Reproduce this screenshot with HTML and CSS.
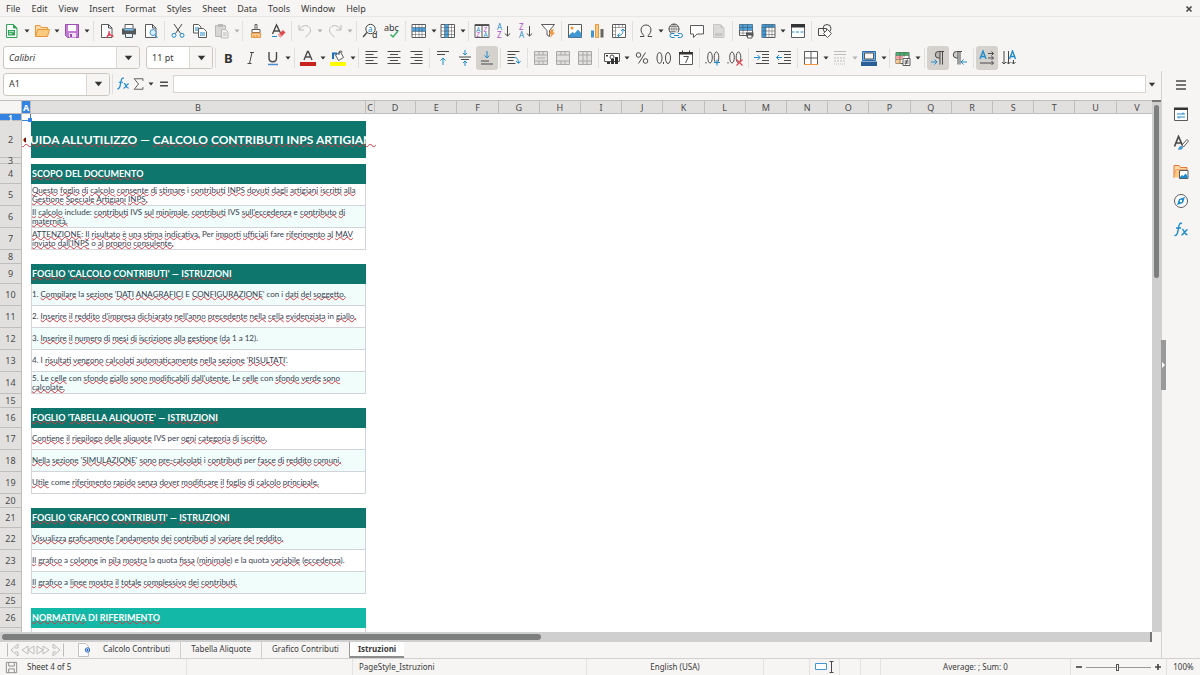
FILE: index.html
```html
<!DOCTYPE html>
<html lang="it">
<head>
<meta charset="utf-8">
<meta name="viewport" content="width=device-width, initial-scale=1">
<title>Calcolo Contributi - Istruzioni</title>
<link rel="stylesheet" href="styles.css">
</head>
<body>
<svg class="defs" aria-hidden="true">
  <symbol id="caret" viewBox="0 0 6 4"><path class="f-dark" d="M.5.5h5L3 3.5z"/></symbol>
  <symbol id="new" viewBox="0 0 16 16"><path d="M2.5 1.500h7l3.500 3.500v9.500h-10.500z" fill="#fff" stroke="#33a457"/><path d="M9.500 1.500v3.500h3.500z" fill="#33a457" stroke="#33a457"/><path d="M4 7h7v5.500H4z" fill="#33a457"/><path d="M5 8.700h5M5 10.700h3" stroke="#c8efd4"/></symbol>
  <symbol id="open" viewBox="0 0 16 16"><path d="M1.500 13.500v-11h4.500l1.500 2h6v2" fill="#fbd9a2" stroke="#e8973a"/><path d="M1.500 13.500l2.300-7h11.700l-2 7z" fill="#fbc980" stroke="#e8973a"/></symbol>
  <symbol id="save" viewBox="0 0 16 16"><path d="M1.500 1.500h13v13h-11l-2-2z" fill="#c47bd4" stroke="#9d4bb3"/><path d="M4 2h8v6H4z" fill="#fff"/><path d="M5 10h7v4.500H5z" fill="#efe0f2"/><path d="M6 11h2v3H6z" fill="#9d4bb3"/></symbol>
  <symbol id="pdf" viewBox="0 0 16 16"><path class="page" d="M2.500 1.500h7l3.500 3.500v9.500h-10.500z"/><path class="ln" d="M9.500 1.500v3.500h3.500"/><path d="M10 8c.5 3-1 5-2.500 7M10 8c0 3 2 5 4.500 5.500M8 13c2-1.200 4-1 6-.5" fill="none" stroke="#e0455a" stroke-width="1.300"/></symbol>
  <symbol id="print" viewBox="0 0 16 16"><path class="page" d="M4 1.500h8v4H4z"/><path d="M1 5.500h14v6H1z" fill="#55585a"/><path d="M3.500 5.500h9v2h-9z" fill="#7cc1ee"/><path d="M4.500 10.500h7v4h-7z" fill="#e6f2fa" stroke="#55585a"/></symbol>
  <symbol id="preview" viewBox="0 0 16 16"><path class="page" d="M2.500 1.500h7l3.500 3.500v9.500h-10.500z"/><path class="ln" d="M9.500 1.500v3.500h3.500"/><circle cx="10" cy="9.500" r="3" fill="#dceefa" stroke="#3f98d4"/><path class="bl" d="M12 12l2.500 3"/></symbol>
  <symbol id="cut" viewBox="0 0 16 16"><path class="ln" d="M4 1l6.500 9.500M12 1L5.500 10.500"/><circle class="bl" cx="4" cy="12.300" r="2"/><circle class="bl" cx="12" cy="12.300" r="2"/></symbol>
  <symbol id="copy" viewBox="0 0 16 16"><path class="page" d="M1.500 1.500h5l2.500 2.500v6h-7.500z"/><path d="M3 5h4M3 7h4" class="bl"/><path class="page" d="M6.500 5.500h5l3 3v6h-8z"/><path d="M8 10h5M8 12h5" class="bl"/></symbol>
  <symbol id="paste" viewBox="0 0 16 16"><path d="M1.500 2.500h10v11h-10z" fill="#d8d7d5" stroke="#bbb9b7"/><path d="M4 1h5v3H4z" fill="#bbb9b7"/><path d="M7.500 6.500h4l2.500 2.500v6h-6.500z" fill="#f2f1f0" stroke="#bbb9b7"/><path d="M9 10h3.500M9 12h3.500" stroke="#bbb9b7"/></symbol>
  <symbol id="clone" viewBox="0 0 16 16"><path class="page" d="M7 1.500h2v5H7zM4 6.500h8v3H4z"/><path d="M3.500 10h9v4.500h-9z" fill="#f9c88d" stroke="#e8973a"/><path d="M6 12v2.500M9 12v2.500" stroke="#e8973a"/></symbol>
  <symbol id="clear" viewBox="0 0 16 16"><path class="ln thick" d="M2.500 11L6.500 2l4 8M4 8h5"/><path d="M8 12l5-5 2.500 2.500-5 5z" fill="#e5484f"/><path d="M8 12l1.500-1.500L12 13l-1.500 1.500z" fill="#f6a1a5"/><path class="bl" d="M2 13.500h5"/></symbol>
  <symbol id="undo" viewBox="0 0 16 16"><path class="off" d="M2 2v5h5M2.500 6.500C5 2 10 1.500 12.500 4.500s.5 6-4 9.500"/></symbol>
  <symbol id="redo" viewBox="0 0 16 16"><path class="off" d="M14 2v5H9M13.500 6.500C11 2 6 1.500 3.500 4.500s-.5 6 4 9.500"/></symbol>
  <symbol id="find" viewBox="0 0 16 16"><circle cx="8.500" cy="6" r="4.700" fill="#fff" stroke="#444"/><path class="ln thick" d="M5 9.500L1 14"/><text x="6" y="8.500" font-size="8" fill="#1e8bcd">a</text><text x="10" y="15" font-size="9" class="f-dark">d</text></symbol>
  <symbol id="spell" viewBox="0 0 16 16"><text x="0" y="7.500" font-size="9" class="f-dark">abc</text><path d="M6.500 11.500l2.500 2.500 5-6" fill="none" stroke="#37b064" stroke-width="1.500"/></symbol>
  <symbol id="row" viewBox="0 0 16 16"><path class="page" d="M1 1.500h13.500v13H1z"/><path d="M1 4.500h13.500v4H1z" fill="#4aa3df"/><path class="ln thin" d="M1 4.500h13.500M1 8.500h13.500M1 11.500h13.500M4.500 1.500v13M8 1.500v13M11 1.500v13"/></symbol>
  <symbol id="col" viewBox="0 0 16 16"><path class="page" d="M1 1.500h13.500v13H1z"/><path d="M4.500 1.500h4v13h-4z" fill="#4aa3df"/><path class="ln thin" d="M1 4.500h13.500M1 8h13.500M1 11.500h13.500M4.500 1.500v13M8.500 1.500v13M11.500 1.500v13"/></symbol>
  <symbol id="sort" viewBox="0 0 16 16"><path class="page" d="M1 1.500h14v13H1z"/><path class="ln" d="M1 2.500h14M8 2v12.500"/><g font-size="6.500"><text x="2.300" y="8.500" fill="#1e8bcd">A</text><text x="2.300" y="14" fill="#b14fc5">Z</text><text x="9.500" y="8.500" fill="#b14fc5">Z</text><text x="9.500" y="14" fill="#1e8bcd">A</text></g></symbol>
  <symbol id="asc" viewBox="0 0 16 16"><g font-size="8"><text x="1" y="7" fill="#1e8bcd">A</text><text x="1" y="15" fill="#b14fc5">Z</text></g><path class="ln" d="M11.500 3v10M8.800 10.500l2.700 2.500 2.700-2.500"/></symbol>
  <symbol id="desc" viewBox="0 0 16 16"><g font-size="8"><text x="1" y="7" fill="#b14fc5">Z</text><text x="1" y="15" fill="#1e8bcd">A</text></g><path class="ln" d="M11.500 3v10M8.800 10.500l2.700 2.500 2.700-2.500"/></symbol>
  <symbol id="filter" viewBox="0 0 16 16"><path class="page" d="M1.500 1.500h13l-5 6v6l-2.500-1.500V7.500z"/><path d="M11 6.500h3l-1.500 3H15l-5 5.500 1.300-4H9z" fill="#f0953b"/></symbol>
  <symbol id="image" viewBox="0 0 16 16"><path class="page" d="M1.500 1.500h13v13h-13z"/><circle cx="5" cy="5" r="1.500" fill="#f0953b"/><path d="M2 12l3.500-3 2 1.500 3.500-4 3.500 4v4H2z" fill="#3f98d4"/></symbol>
  <symbol id="chart" viewBox="0 0 16 16"><path d="M2 7.500h3v7H2z" fill="#3f98d4"/><path d="M6.500 1.500h3v13h-3z" fill="#fbc980" stroke="#e8973a"/><path d="M11.500 6h3v8.500h-3z" fill="#666"/></symbol>
  <symbol id="pivot" viewBox="0 0 16 16"><path class="page" d="M1.500 1.500h13v13h-13z"/><path class="ln thin" d="M1.500 4.500h13M4.500 1.500v13M8 1.500v3M11.500 1.500v3M1.500 8h3M1.500 11.500h3"/><path class="bl" d="M7 12.500c3.500 0 5-1.500 5-5.500M10 8l2-2 2 2M8.500 10.500l-2 2 2 2"/></symbol>
  <symbol id="omega" viewBox="0 0 16 16"><path class="ln" d="M2 13.500h4c.3-1.500-3-3-3-6.500C3 3.500 5.500 2 8 2s5 1.500 5 5c0 3.500-3.300 5-3 6.500h4"/></symbol>
  <symbol id="link" viewBox="0 0 16 16"><circle class="ln" cx="7" cy="6" r="5"/><path class="ln thin" d="M2 6h10M7 1v10M3 3.500h8M3 8.500h5M7 1C4 4 4 8 7 11M7 1c3 3 3 7 0 10"/><path d="M6 9.500h10v6H3z" fill="#f6f5f4"/><path class="bl" d="M7.500 10.500H5a2 2 0 000 4h2.500M11 10.500h2.500a2 2 0 010 4H11M7 12.500h5"/></symbol>
  <symbol id="comment" viewBox="0 0 16 16"><path class="page" d="M1.500 2.500h13v8.500H8l-3.500 3.500V11h-3z"/></symbol>
  <symbol id="headfoot" viewBox="0 0 16 16"><path d="M2.500 1.500h7l3.500 3.500v9.500h-10.500z" fill="#dbdad8" stroke="#c6c5c3"/><path d="M4 10h7v3H4zM9.500 1.500v3.500h3.500" fill="#c6c5c3"/></symbol>
  <symbol id="area" viewBox="0 0 16 16"><path class="page" d="M1.500 1.500h13v11h-13z"/><path d="M1.500 1.500h13v6h-13z" fill="#4aa3df"/><path class="ln thin" d="M1.500 4.500h13M1.500 7.500h13M1.500 10h13M5 1.500v11M9.500 1.500v11"/><path d="M8 9.500h7.500v4H8z" fill="#55585a"/><path class="page" d="M9.500 12h4.500v3H9.500z"/></symbol>
  <symbol id="freeze" viewBox="0 0 16 16"><path class="page" d="M2 1.500h13v13H2z"/><path d="M2 1.500h13v3H2zM2 2h4v12.500H2z" fill="#3f98d4"/><path class="ln thin" d="M2 4.500h13M2 8h13M2 11.500h13M6 1.500v13M9 1.500v13M12 1.500v13"/></symbol>
  <symbol id="split" viewBox="0 0 16 16"><path class="page" d="M1.500 2.500h13v12h-13z"/><path class="f-dark" d="M1 1h14v3.500H1z"/><path class="bl" d="M1.500 9h13" stroke-dasharray="3 1.500"/></symbol>
  <symbol id="shapes" viewBox="0 0 16 16"><path class="ln" d="M1.500 5.500h8v7h-8z"/><circle class="ln" cx="10" cy="5.500" r="4"/><path class="page" d="M10.500 6.500l4 4-4 4-4-4z"/></symbol>
  <symbol id="bold" viewBox="0 0 16 16"><text x="3" y="13" font-size="13" font-weight="bold" class="f-dark">B</text></symbol>
  <symbol id="italic" viewBox="0 0 16 16"><path class="ln" d="M7 2.500h4M4.500 13.500h4M9 2.500l-2.500 11"/></symbol>
  <symbol id="underline" viewBox="0 0 16 16"><path class="ln thick" d="M4 2v6c0 5 7.500 5 7.500 0V2"/><path d="M3 14.500h10" stroke="#4a8fd4" stroke-width="1.500"/></symbol>
  <symbol id="fontcolor" viewBox="0 0 16 16"><path class="ln thick" d="M4 10L7.500 1.500h.8L12 10M5.300 7h5.200"/><path d="M0 12h16v4H0z" fill="#c9211e"/></symbol>
  <symbol id="fill" viewBox="0 0 16 16"><path class="page" d="M5.500 5l5-3 3 5.500-5 3z"/><path d="M3 9V3.500h4" fill="none" stroke="#1e6fb8" stroke-width="2"/><path class="ln" d="M9 5V2.500a1.500 1.500 0 013 0"/><path d="M0 12h16v4H0z" fill="#ffff00"/></symbol>
  <symbol id="left" viewBox="0 0 16 16"><path class="ln" d="M1.500 1.500h12M1.500 4.500h8M1.500 7.500h12M1.500 10.500h8M1.500 13.500h12"/></symbol>
  <symbol id="center" viewBox="0 0 16 16"><path class="ln" d="M1.500 1.500h13M4 4.500h8M1.500 7.500h13M4 10.500h8M1.500 13.500h13"/></symbol>
  <symbol id="right" viewBox="0 0 16 16"><path class="ln" d="M2.500 1.500h12M6.500 4.500h8M2.500 7.500h12M6.500 10.500h8M2.500 13.500h12"/></symbol>
  <symbol id="top" viewBox="0 0 16 16"><path class="ln" d="M2 1.500h12M2 4.500h8"/><path class="bl" d="M8 15V8M5.500 10.500L8 8l2.500 2.500"/></symbol>
  <symbol id="middle" viewBox="0 0 16 16"><path class="ln" d="M2 7h12M4 9.500h8"/><path class="bl" d="M8 0v5M6 3l2 2 2-2M8 16v-5M6 13l2-2 2 2"/></symbol>
  <symbol id="bottom" viewBox="0 0 16 16"><path class="ln" d="M2 14h12M2 11h8"/><path class="bl" d="M8 1v7M5.500 5.500L8 8l2.500-2.500"/></symbol>
  <symbol id="wrap" viewBox="0 0 16 16"><path class="ln" d="M1.500 1.500h12M1.500 4.500h8M1.500 7.500h7M1.500 10.500h6M1.500 13.500h8"/><path class="bl" d="M8 7.500c3 0 4 1 4.500 5.500M10 11l2.500 2.500L14.500 11"/></symbol>
  <symbol id="merge" viewBox="0 0 16 16"><path class="offbox" d="M1.500 1.500h13v13h-13zM1.500 5h13M1.500 11h13M6 1.500V5M10 1.500V5M6 11v3.500M10 11v3.500M4 8h8"/></symbol>
  <symbol id="mergecells" viewBox="0 0 16 16"><path class="offbox" d="M1.500 1.500h13v13h-13zM1.500 5h13M1.500 11h13M6 1.500V5M10 1.500V5M6 11v3.500M10 11v3.500"/></symbol>
  <symbol id="unmerge" viewBox="0 0 16 16"><path class="offbox" d="M1.500 1.500h13v13h-13zM1.500 5h13M1.500 11h13M6 1.500v13M10 1.500v13"/></symbol>
  <symbol id="money" viewBox="0 0 16 16"><path class="page" d="M.5 3.500h15v8H.5z"/><circle class="ln" cx="8" cy="7" r="2"/><path class="f-dark" d="M7 9h3v5H7zM11 7h3v7h-3zM2 5h2v1.500H2zM3 12h3v2H3z"/></symbol>
  <symbol id="percent" viewBox="0 0 16 16"><circle class="ln" cx="4.500" cy="5" r="2.300"/><circle class="ln" cx="11.500" cy="11" r="2.300"/><path class="ln" d="M11.500 2.500l-7 11"/></symbol>
  <symbol id="number" viewBox="0 0 16 16"><ellipse class="ln" cx="3.500" cy="8" rx="2.500" ry="5.500"/><ellipse class="ln" cx="12" cy="8" rx="2.500" ry="5.500"/><path class="ln" d="M7.500 12v2"/></symbol>
  <symbol id="date" viewBox="0 0 16 16"><path class="page" d="M1.500 2.500h13v12h-13z"/><path class="f-dark" d="M1 2h14v2.500H1zM4 .5h1V3H4zM11 .5h1V3h-1z"/><path class="ln" d="M5.500 6.500h5l-3 6.500"/></symbol>
  <symbol id="adddec" viewBox="0 0 16 16"><path class="ln" d="M1 12v1.500"/><ellipse class="ln" cx="5" cy="7.500" rx="2.300" ry="5.500"/><ellipse class="ln" cx="11.500" cy="7.500" rx="2.300" ry="5.500"/><path class="bl" d="M12 9.500v6M9 12.500h6"/></symbol>
  <symbol id="deldec" viewBox="0 0 16 16"><path class="ln" d="M1 12v1.500"/><ellipse class="ln" cx="5" cy="7.500" rx="2.300" ry="5.500"/><ellipse class="ln" cx="11.500" cy="7.500" rx="2.300" ry="5.500"/><path d="M9.500 9.500l6 6M15.500 9.500l-6 6" stroke="#e5484f" stroke-width="1.200"/></symbol>
  <symbol id="indent" viewBox="0 0 16 16"><path class="ln" d="M2 1.500h13M8 4.500h7M8 7.500h7M8 10.500h7M2 13.500h13"/><path class="bl" d="M0 7.500h6M3.500 5L6 7.500 3.500 10"/></symbol>
  <symbol id="outdent" viewBox="0 0 16 16"><path class="ln" d="M2 1.500h13M8 4.500h7M8 7.500h7M8 10.500h7M2 13.500h13"/><path class="bl" d="M6 7.500H.5M3 5L.5 7.500 3 10"/></symbol>
  <symbol id="border" viewBox="0 0 16 16"><path class="page" d="M1.500 1.500h13v13h-13zM8 1.500v13M1.500 8h13"/><path d="M1 14.500h14" stroke="#f0953b"/></symbol>
  <symbol id="linestyle" viewBox="0 0 16 16"><path class="off" d="M2 1.500h12M2 4.500h12"/><path class="off" d="M2 8h12M2 11h12" stroke-dasharray="2 1"/><path class="off" d="M2 14h12" stroke-dasharray="1 1"/></symbol>
  <symbol id="bordercolor" viewBox="0 0 16 16"><path d="M1.500 1.500h13v9h-13z" fill="#6fb3e6" stroke="#2a6db5"/><path d="M3.500 3h9v6h-9z" fill="#f6f5f4" stroke="#555"/><path d="M0 11.500h16V16H0z" fill="#2a6099"/></symbol>
  <symbol id="cond" viewBox="0 0 16 16"><path class="page" d="M1 2.500h13v11H1z"/><path d="M1 2.500h13v3H1z" fill="#46b06a"/><path d="M1 6h7v3H1z" fill="#f7a1a5"/><path d="M1 9.500h5v4H1z" fill="#f9c88d"/><path class="ln thin" d="M1 5.500h13M1 9.500h6M5 2.500v11M9 2.500V7"/><path class="page" d="M8 8.500h7v7H8z"/><path class="ln" d="M9.500 11h4M9.500 13h4M12.500 9.500l-2 5"/></symbol>
  <symbol id="ltr" viewBox="0 0 16 16"><path d="M10 1.500H8.500a3.200 3.200 0 000 6.500H10z" fill="#b9b6b2"/><path class="ln" d="M14 1.500H8.500a3.200 3.200 0 000 6.500H10M10 1.500v13M12.500 1.500v13"/><path class="bl" d="M1 12h6M4.500 9.500L7 12l-2.500 2.500"/></symbol>
  <symbol id="rtl" viewBox="0 0 16 16"><path d="M6 1.500H4.500a3.200 3.200 0 000 6.500H6z" fill="#cfcdca"/><path class="ln" d="M10 1.500H4.500a3.200 3.200 0 000 6.500H6M6 1.500v13M8 1.500v13"/><path class="bl" d="M15 12H9M11.500 9.500L9 12l2.500 2.500"/></symbol>
  <symbol id="horiz" viewBox="0 0 16 16"><path class="bl thick" d="M1 9l3-8 3 8M2 6.500h4"/><path class="ln" d="M9 3.500h5.500M12.500 1.500l2 2-2 2M9 8h5.500M12.500 6l2 2-2 2M1 13h13.500M12.500 11l2 2-2 2"/></symbol>
  <symbol id="vert" viewBox="0 0 16 16"><path class="bl thick" d="M8.500 9l3-8 3 8M9.500 6.500h4"/><path class="ln" d="M3 1v13M1 12l2 2 2-2M7.500 1v13M5.500 12l2 2 2-2M12.500 10v4M10.500 12l2 2 2-2"/></symbol>
  <symbol id="fx" viewBox="0 0 16 16"><path class="bl thick" d="M9 1.500C6.500.5 6 3 5.500 6S4.500 14 1.500 13.500M3 6h5M9 7.500c2-1 2.500 6 5.500 5M14.500 7.500c-2 .5-4 5.500-6 5.500"/></symbol>
  <symbol id="sum" viewBox="0 0 16 16"><path class="ln" d="M12.500 4.500V2h-10l5 6-5 6h10v-2.500"/></symbol>
  <symbol id="equals" viewBox="0 0 16 16"><path class="ln wide" d="M3.500 6h9M3.500 10h9"/></symbol>
  <symbol id="burger" viewBox="0 0 16 16"><path class="ln wide" d="M3 4h10M3 8h10M3 12h10"/></symbol>
  <symbol id="props" viewBox="0 0 16 16"><path class="page" d="M1.500 2.500h13v12h-13z"/><path class="f-dark" d="M1 1.500h14V4H1z"/><path class="bl" d="M4 8h8M10 6.500V8M4 11h8M6 11v1.500"/></symbol>
  <symbol id="styles" viewBox="0 0 16 16"><path class="ln wide" d="M1.500 11.500L5.500 1.500l4 9M3 8h5"/><path class="page" d="M9 10l5-5.500 1.500 1.500-5 6z"/><path d="M5 14.500c1-3 3-4.500 5-2.500 0 2-2 3.500-5 2.500z" fill="#3f98d4"/></symbol>
  <symbol id="gallery" viewBox="0 0 16 16"><path d="M1 13.500V1.500h5l1.500 2H14V6H3z" fill="#fbd9a2" stroke="#e8773a"/><path d="M1 13.500L3 6h5v7.500z" fill="#fbc980"/><path class="page" d="M6.500 6.500h8.500v8H6.500z"/><path d="M7 13l2-2 1.500 1 2-2.500 2 2.500v2H7z" fill="#1e8bcd"/></symbol>
  <symbol id="compass" viewBox="0 0 16 16"><circle class="page" cx="8" cy="8" r="6.500"/><path d="M12 4l-2 6-6 2 2-6z" fill="#1e8bcd"/><circle cx="8" cy="8" r="1.200" fill="#fff"/></symbol>
  <symbol id="first" viewBox="0 0 16 16"><path class="off" d="M2.500 1.500v13M13 2L6 8l7 6v-4h-3M13 2v4h-3"/></symbol>
  <symbol id="prev" viewBox="0 0 16 16"><path class="off" d="M8 4L2 8l6 4zM14 4L8 8l6 4z"/></symbol>
  <symbol id="addsheet" viewBox="0 0 16 16"><path d="M1.500 1.500h7l3 3v10h-10z" fill="#fff" stroke="#c4c3c1"/><circle cx="10.500" cy="8" r="2.200" fill="#fff" stroke="#2466c2"/><path d="M10.500 6.800v2.400M9.300 8h2.400" stroke="#2466c2"/></symbol>
  <symbol id="disk" viewBox="0 0 16 16"><path d="M2.500 2.500h11v11h-11zM5 2.500v4h6v-4M5 13.500v-4h6v4" fill="#f6f5f4" stroke="#8c8b8a"/></symbol>
</svg>

<header>
  <nav class="menubar" aria-label="Menu">
    <button>File</button><button>Edit</button><button>View</button><button>Insert</button><button>Format</button><button>Styles</button><button>Sheet</button><button>Data</button><button>Tools</button><button>Window</button><button>Help</button>
    <button class="close" aria-label="Close"><svg viewBox="0 0 8 8"><path class="ln wide" d="M1.500 1.500l5 5M6.500 1.500l-5 5"/></svg></button>
  </nav>

  <div class="toolbar standard" role="toolbar" aria-label="Standard">
    <button class="tool drop" aria-label="New"><svg><use href="#new"/></svg><svg class="caret"><use href="#caret"/></svg></button>
    <button class="tool drop" aria-label="Open"><svg><use href="#open"/></svg><svg class="caret"><use href="#caret"/></svg></button>
    <button class="tool drop" aria-label="Save"><svg><use href="#save"/></svg><svg class="caret"><use href="#caret"/></svg></button>
    <i class="sep"></i>
    <button class="tool" aria-label="Export as PDF"><svg><use href="#pdf"/></svg></button>
    <button class="tool" aria-label="Print"><svg><use href="#print"/></svg></button>
    <button class="tool" aria-label="Print preview"><svg><use href="#preview"/></svg></button>
    <i class="sep"></i>
    <button class="tool" aria-label="Cut"><svg><use href="#cut"/></svg></button>
    <button class="tool" aria-label="Copy"><svg><use href="#copy"/></svg></button>
    <button class="tool drop tight dim" aria-label="Paste"><svg><use href="#paste"/></svg><svg class="caret"><use href="#caret"/></svg></button>
    <i class="sep"></i>
    <button class="tool" aria-label="Clone formatting"><svg><use href="#clone"/></svg></button>
    <button class="tool" aria-label="Clear formatting"><svg><use href="#clear"/></svg></button>
    <i class="sep"></i>
    <button class="tool drop dim" aria-label="Undo"><svg><use href="#undo"/></svg><svg class="caret"><use href="#caret"/></svg></button>
    <button class="tool drop dim" aria-label="Redo"><svg><use href="#redo"/></svg><svg class="caret"><use href="#caret"/></svg></button>
    <i class="sep"></i>
    <button class="tool" aria-label="Find and replace"><svg><use href="#find"/></svg></button>
    <button class="tool" aria-label="Spelling"><svg><use href="#spell"/></svg></button>
    <i class="sep"></i>
    <button class="tool drop tight" aria-label="Row"><svg><use href="#row"/></svg><svg class="caret"><use href="#caret"/></svg></button>
    <button class="tool drop tight" aria-label="Column"><svg><use href="#col"/></svg><svg class="caret"><use href="#caret"/></svg></button>
    <i class="sep"></i>
    <button class="tool" aria-label="Sort"><svg><use href="#sort"/></svg></button>
    <button class="tool" aria-label="Sort ascending"><svg><use href="#asc"/></svg></button>
    <button class="tool" aria-label="Sort descending"><svg><use href="#desc"/></svg></button>
    <button class="tool" aria-label="AutoFilter"><svg><use href="#filter"/></svg></button>
    <i class="sep"></i>
    <button class="tool" aria-label="Image"><svg><use href="#image"/></svg></button>
    <button class="tool" aria-label="Chart"><svg><use href="#chart"/></svg></button>
    <button class="tool" aria-label="Pivot table"><svg><use href="#pivot"/></svg></button>
    <i class="sep"></i>
    <button class="tool drop tight" aria-label="Special character"><svg><use href="#omega"/></svg><svg class="caret"><use href="#caret"/></svg></button>
    <button class="tool" aria-label="Hyperlink"><svg><use href="#link"/></svg></button>
    <button class="tool" aria-label="Comment"><svg><use href="#comment"/></svg></button>
    <button class="tool" aria-label="Headers and footers"><svg><use href="#headfoot"/></svg></button>
    <i class="sep"></i>
    <button class="tool" aria-label="Define print area"><svg><use href="#area"/></svg></button>
    <button class="tool drop" aria-label="Freeze rows and columns"><svg><use href="#freeze"/></svg><svg class="caret"><use href="#caret"/></svg></button>
    <button class="tool" aria-label="Split window"><svg><use href="#split"/></svg></button>
    <i class="sep"></i>
    <button class="tool" aria-label="Draw functions"><svg><use href="#shapes"/></svg></button>
  </div>

  <div class="toolbar formatting" role="toolbar" aria-label="Formatting">
    <div class="combo font-name"><input aria-label="Font name" value="Calibri"><button aria-label="Font list"><svg class="caret"><use href="#caret"/></svg></button></div>
    <div class="combo font-size"><input aria-label="Font size" value="11 pt"><button aria-label="Size list"><svg class="caret"><use href="#caret"/></svg></button></div>
    <i class="sep"></i>
    <button class="tool" aria-label="Bold"><svg><use href="#bold"/></svg></button>
    <button class="tool" aria-label="Italic"><svg><use href="#italic"/></svg></button>
    <button class="tool drop" aria-label="Underline"><svg><use href="#underline"/></svg><svg class="caret"><use href="#caret"/></svg></button>
    <i class="sep"></i>
    <button class="tool drop" aria-label="Font color"><svg><use href="#fontcolor"/></svg><svg class="caret"><use href="#caret"/></svg></button>
    <button class="tool drop tight" aria-label="Background color"><svg><use href="#fill"/></svg><svg class="caret"><use href="#caret"/></svg></button>
    <i class="sep"></i>
    <button class="tool" aria-label="Align left"><svg><use href="#left"/></svg></button>
    <button class="tool" aria-label="Center horizontally"><svg><use href="#center"/></svg></button>
    <button class="tool" aria-label="Align right"><svg><use href="#right"/></svg></button>
    <i class="sep"></i>
    <button class="tool" aria-label="Align top"><svg><use href="#top"/></svg></button>
    <button class="tool" aria-label="Center vertically"><svg><use href="#middle"/></svg></button>
    <button class="tool on" aria-label="Align bottom"><svg><use href="#bottom"/></svg></button>
    <i class="sep"></i>
    <button class="tool" aria-label="Wrap text"><svg><use href="#wrap"/></svg></button>
    <i class="sep"></i>
    <button class="tool" aria-label="Merge and center"><svg><use href="#merge"/></svg></button>
    <button class="tool" aria-label="Merge cells"><svg><use href="#mergecells"/></svg></button>
    <button class="tool" aria-label="Unmerge cells"><svg><use href="#unmerge"/></svg></button>
    <i class="sep"></i>
    <button class="tool drop" aria-label="Currency"><svg><use href="#money"/></svg><svg class="caret"><use href="#caret"/></svg></button>
    <button class="tool" aria-label="Percent"><svg><use href="#percent"/></svg></button>
    <button class="tool" aria-label="Number"><svg><use href="#number"/></svg></button>
    <button class="tool" aria-label="Date"><svg><use href="#date"/></svg></button>
    <i class="sep"></i>
    <button class="tool" aria-label="Add decimal place"><svg><use href="#adddec"/></svg></button>
    <button class="tool" aria-label="Delete decimal place"><svg><use href="#deldec"/></svg></button>
    <i class="sep"></i>
    <button class="tool" aria-label="Increase indent"><svg><use href="#indent"/></svg></button>
    <button class="tool" aria-label="Decrease indent"><svg><use href="#outdent"/></svg></button>
    <i class="sep"></i>
    <button class="tool drop tight" aria-label="Borders"><svg><use href="#border"/></svg><svg class="caret"><use href="#caret"/></svg></button>
    <button class="tool drop tight dim" aria-label="Border style"><svg><use href="#linestyle"/></svg><svg class="caret"><use href="#caret"/></svg></button>
    <button class="tool drop tight" aria-label="Border color"><svg><use href="#bordercolor"/></svg><svg class="caret"><use href="#caret"/></svg></button>
    <i class="sep"></i>
    <button class="tool drop" aria-label="Conditional formatting"><svg><use href="#cond"/></svg><svg class="caret"><use href="#caret"/></svg></button>
    <i class="sep"></i>
    <button class="tool on" aria-label="Left to right"><svg><use href="#ltr"/></svg></button>
    <button class="tool" aria-label="Right to left"><svg><use href="#rtl"/></svg></button>
    <i class="sep"></i>
    <button class="tool on" aria-label="Horizontal text"><svg><use href="#horiz"/></svg></button>
    <button class="tool" aria-label="Vertical text"><svg><use href="#vert"/></svg></button>
  </div>
</header>

<div class="workspace">
  <main class="document">
    <div class="formula-bar">
      <div class="combo name-box"><input aria-label="Name box" value="A1"><button aria-label="Named ranges"><svg class="caret"><use href="#caret"/></svg></button></div>
      <i class="sep"></i>
      <button class="mini" aria-label="Function wizard"><svg><use href="#fx"/></svg></button>
      <button class="mini sum" aria-label="Sum"><svg><use href="#sum"/></svg><svg class="caret"><use href="#caret"/></svg></button>
      <button class="mini" aria-label="Formula"><svg><use href="#equals"/></svg></button>
      <input class="formula" aria-label="Input line" value="">
      <button class="expand" aria-label="Expand formula bar"><svg class="caret"><use href="#caret"/></svg></button>
    </div>

    <div class="grid-area">
      <div class="grid-view">
        <table class="sheet">
          <colgroup><col class="c-head"><col class="c-slim"><col class="c-text"><col class="c-slim"><col span="19"></colgroup>
          <thead>
            <tr><th></th><th class="sel">A</th><th>B</th><th>C</th><th>D</th><th>E</th><th>F</th><th>G</th><th>H</th><th>I</th><th>J</th><th>K</th><th>L</th><th>M</th><th>N</th><th>O</th><th>P</th><th>Q</th><th>R</th><th>S</th><th>T</th><th>U</th><th>V</th></tr>
          </thead>
          <tbody>
            <tr class="r-first"><th class="sel">1</th><td class="cursor"></td><td></td></tr>
            <tr class="r-title"><th>2</th><td><svg class="more" viewBox="0 0 4 6"><path d="M4 0v6L0 3z" fill="#7a0c0c"/></svg></td><td><div><span><u>GUIDA</u> <u>ALL'UTILIZZO</u> — <u>CALCOLO</u> <u>CONTRIBUTI INPS</u> <u>ARTIGIANI</u></span></div></td></tr>
            <tr class="r-thin"><th>3</th><td></td><td></td></tr>
            <tr class="r-section"><th>4</th><td></td><td><u>SCOPO</u> DEL <u>DOCUMENTO</u></td></tr>
            <tr class="r-text"><th>5</th><td></td><td><u>Questo</u> <u>foglio</u> <u>di</u> <u>calcolo</u> <u>consente</u> <u>di</u> <u>stimare</u> i <u>contributi</u> <u>INPS</u> <u>dovuti</u> <u>dagli</u> <u>artigiani</u> <u>iscritti</u> <u>alla</u><br><u>Gestione</u> <u>Speciale</u> <u>Artigiani</u> <u>INPS.</u></td></tr>
            <tr class="r-text tint"><th>6</th><td></td><td><u>Il</u> <u>calcolo</u> include: <u>contributi</u> IVS <u>sul</u> <u>minimale</u>, <u>contributi</u> IVS <u>sull'eccedenza</u> e <u>contributo</u> <u>di</u><br><u>maternità.</u></td></tr>
            <tr class="r-text"><th>7</th><td></td><td><u>ATTENZIONE</u>: <u>Il</u> <u>risultato</u> <u>è</u> <u>una</u> <u>stima</u> <u>indicativa.</u> Per <u>importi</u> <u>ufficiali</u> fare <u>riferimento</u> <u>al</u> <u>MAV</u><br><u>inviato</u> <u>dall'INPS</u> o <u>al</u> <u>proprio</u> <u>consulente.</u></td></tr>
            <tr class="r-gap"><th>8</th><td></td><td></td></tr>
            <tr class="r-section"><th>9</th><td></td><td><u>FOGLIO</u> '<u>CALCOLO</u> <u>CONTRIBUTI</u>' — <u>ISTRUZIONI</u></td></tr>
            <tr class="r-text tint"><th>10</th><td></td><td>1. <u>Compilare</u> la <u>sezione</u> '<u>DATI</u> <u>ANAGRAFICI</u> E <u>CONFIGURAZIONE</u>' con i <u>dati</u> <u>del</u> <u>soggetto.</u></td></tr>
            <tr class="r-text"><th>11</th><td></td><td>2. <u>Inserire</u> <u>il</u> <u>reddito</u> <u>d'impresa</u> <u>dichiarato</u> <u>nell'anno</u> <u>precedente</u> <u>nella</u> <u>cella</u> <u>evidenziata</u> in <u>giallo.</u></td></tr>
            <tr class="r-text tint"><th>12</th><td></td><td>3. <u>Inserire</u> <u>il</u> <u>numero</u> <u>di</u> <u>mesi</u> <u>di</u> <u>iscrizione</u> <u>alla</u> <u>gestione</u> (<u>da</u> 1 a 12).</td></tr>
            <tr class="r-text"><th>13</th><td></td><td>4. I <u>risultati</u> <u>vengono</u> <u>calcolati</u> <u>automaticamente</u> <u>nella</u> <u>sezione</u> '<u>RISULTATI</u>'.</td></tr>
            <tr class="r-text tint"><th>14</th><td></td><td>5. Le <u>celle</u> con <u>sfondo</u> <u>giallo</u> <u>sono</u> <u>modificabili</u> <u>dall'utente.</u> Le <u>celle</u> con <u>sfondo</u> <u>verde</u> <u>sono</u><br><u>calcolate.</u></td></tr>
            <tr class="r-gap"><th>15</th><td></td><td></td></tr>
            <tr class="r-section"><th>16</th><td></td><td><u>FOGLIO</u> '<u>TABELLA</u> <u>ALIQUOTE</u>' — <u>ISTRUZIONI</u></td></tr>
            <tr class="r-text"><th>17</th><td></td><td><u>Contiene</u> <u>il</u> <u>riepilogo</u> <u>delle</u> <u>aliquote</u> IVS per <u>ogni</u> <u>categoria</u> <u>di</u> <u>iscritto.</u></td></tr>
            <tr class="r-text tint"><th>18</th><td></td><td><u>Nella</u> <u>sezione</u> '<u>SIMULAZIONE</u>' <u>sono</u> <u>pre-calcolati</u> i <u>contributi</u> per <u>fasce</u> <u>di</u> <u>reddito</u> <u>comuni.</u></td></tr>
            <tr class="r-text"><th>19</th><td></td><td><u>Utile</u> come <u>riferimento</u> <u>rapido</u> <u>senza</u> <u>dover</u> <u>modificare</u> <u>il</u> <u>foglio</u> <u>di</u> <u>calcolo</u> <u>principale.</u></td></tr>
            <tr class="r-gap"><th>20</th><td></td><td></td></tr>
            <tr class="r-section"><th>21</th><td></td><td><u>FOGLIO</u> '<u>GRAFICO</u> <u>CONTRIBUTI</u>' — <u>ISTRUZIONI</u></td></tr>
            <tr class="r-text tint"><th>22</th><td></td><td><u>Visualizza</u> <u>graficamente</u> <u>l'andamento</u> <u>dei</u> <u>contributi</u> <u>al</u> <u>variare</u> <u>del</u> <u>reddito.</u></td></tr>
            <tr class="r-text"><th>23</th><td></td><td><u>Il</u> <u>grafico</u> a <u>colonne</u> in <u>pila</u> <u>mostra</u> la quota <u>fissa</u> (<u>minimale</u>) e la quota <u>variabile</u> (<u>eccedenza</u>).</td></tr>
            <tr class="r-text tint"><th>24</th><td></td><td><u>Il</u> <u>grafico</u> a <u>linee</u> <u>mostra</u> <u>il</u> <u>totale</u> <u>complessivo</u> <u>dei</u> <u>contributi.</u></td></tr>
            <tr class="r-gap"><th>25</th><td></td><td></td></tr>
            <tr class="r-section light"><th>26</th><td></td><td><u>NORMATIVA</u> DI <u>RIFERIMENTO</u></td></tr>
            <tr class="r-text"><th></th><td></td><td></td></tr>
          </tbody>
        </table>
      </div>
      <div class="v-scroll"><div class="thumb"></div></div>
      <div class="h-scroll"><div class="thumb"></div></div>
    </div>

    <nav class="sheet-tabs" aria-label="Sheets">
      <div class="tab-nav">
        <button aria-label="First sheet"><svg><use href="#first"/></svg></button>
        <button aria-label="Previous sheet"><svg><use href="#prev"/></svg></button>
        <button class="flip" aria-label="Next sheet"><svg><use href="#prev"/></svg></button>
        <button class="flip" aria-label="Last sheet"><svg><use href="#first"/></svg></button>
      </div>
      <button class="add" aria-label="Add sheet"><svg><use href="#addsheet"/></svg></button>
      <button class="tab">Calcolo Contributi</button>
      <button class="tab">Tabella Aliquote</button>
      <button class="tab">Grafico Contributi</button>
      <button class="tab active">Istruzioni</button>
    </nav>
  </main>

  <aside class="sidebar" aria-label="Sidebar">
    <button aria-label="Sidebar settings"><svg><use href="#burger"/></svg></button>
    <button aria-label="Properties"><svg><use href="#props"/></svg></button>
    <button aria-label="Styles"><svg><use href="#styles"/></svg></button>
    <button aria-label="Gallery"><svg><use href="#gallery"/></svg></button>
    <button aria-label="Navigator"><svg><use href="#compass"/></svg></button>
    <button aria-label="Functions"><svg><use href="#fx"/></svg></button>
    <div class="grip"><svg viewBox="0 0 4 6"><path d="M1 0l3 3-3 3z" fill="#fff"/></svg></div>
  </aside>
</div>

<footer class="status">
  <div class="s-sheet"><svg><use href="#disk"/></svg><span>Sheet 4 of 5</span></div>
  <div class="s-blank"></div>
  <div class="s-style">PageStyle_Istruzioni</div>
  <div class="s-lang">English (USA)</div>
  <div class="s-blank"></div>
  <div class="s-mode"><svg viewBox="0 0 20 12"><path d="M.5 2.500h11v6H.5z" fill="#fff" stroke="#3f98d4"/><path class="ln" d="M14.500.5h4M14.500 11.500h4M16.500.5v11"/></svg></div>
  <div></div>
  <div></div>
  <div class="s-sum">Average: ; Sum: 0</div>
  <div class="s-zoom"><button aria-label="Zoom out"><svg viewBox="0 0 8 8"><path class="ln wide" d="M1 4h6"/></svg></button><input type="range" aria-label="Zoom" min="0" max="100" value="49"><button aria-label="Zoom in"><svg viewBox="0 0 8 8"><path class="ln wide" d="M1 4h6M4 1v6"/></svg></button></div>
  <div class="s-pct">100%</div>
</footer>
</body>
</html>
```

FILE: styles.css
```css
* { box-sizing: border-box; }

body {
  margin: 0;
  height: 100vh;
  display: flex;
  flex-direction: column;
  overflow: hidden;
  background: #f6f5f4;
  color: #3a3a3a;
  font: 9px/12px "Noto Sans", sans-serif;
}

button {
  padding: 0;
  border: 0;
  background: none;
  color: inherit;
  font: inherit;
  display: flex;
  align-items: center;
  justify-content: center;
}

input {
  font: inherit;
  color: inherit;
  min-width: 0;
}

svg { display: block; width: 16px; height: 16px; flex: none; }
.defs { display: none; }
.f-dark { fill: #333; }
.ln { fill: none; stroke: #4a4a4a; }
.page { fill: #fff; stroke: #5b5b5b; }
.bl { fill: none; stroke: #1e8bcd; }
.off { fill: none; stroke: #bdbcba; }
.offbox { fill: #e2e1df; stroke: #a9a8a6; }
.thin { stroke-width: 0.5; }
.thick { stroke-width: 1.4; }
.wide { stroke-width: 1.7; }
.caret { width: 6px; height: 4px; }

/* Menu bar */
.menubar {
  display: flex;
  gap: 11px;
  height: 17px;
  padding: 1px 7px 0 6px;
  border-bottom: 1px solid #e8e7e5;
}
.close { margin-left: auto; }
.close svg { width: 8px; height: 8px; }

/* Toolbars */
.toolbar { display: flex; align-items: center; }
.standard { height: 27px; padding-left: 1px; }
.formatting { height: 27px; padding-left: 3px; }
.tool { width: 22px; height: 24px; border-radius: 3px; flex: none; }
.tool.on { background: #d5d2ce; }
.drop { width: 30px; gap: 4px; justify-content: flex-start; padding-left: 3px; }
.drop.tight { width: 29px; }
.dim .caret { opacity: 0.35; }
.sep {
  width: 5px;
  height: 20px;
  flex: none;
  background: linear-gradient(#e0dfdd, #e0dfdd) center / 1px 100% no-repeat;
}

.combo {
  display: flex;
  height: 23px;
  border: 1px solid #cdc7c2;
  border-radius: 3px;
  background: #fff;
  overflow: hidden;
}
.combo input { flex: 1; border: 0; padding: 0 5px; outline: 0; background: none; }
.combo button { width: 23px; border-left: 1px solid #dcd8d4; background: #f6f5f4; }
.combo .caret { width: 9px; height: 6px; }
.font-name { width: 137px; margin-right: 6px; }
.font-name input { font-style: italic; }
.font-size { width: 67px; }

/* Workspace */
.workspace { flex: 1; min-height: 0; display: flex; }
.document { flex: 1; min-width: 0; display: flex; flex-direction: column; }

.formula-bar { display: flex; align-items: center; height: 29px; padding: 0 4px 3px 3px; }
.name-box { width: 107px; }
.mini { height: 20px; margin-left: 1px; }
.mini svg:first-child { width: 14px; height: 14px; }
.sum { gap: 2px; margin-left: 2px; }
.sum .caret { width: 6px; height: 4px; }
.sum + .mini { margin: 0 2px 0 3px; }
.formula { flex: 1; height: 18px; border: 1px solid #d8d5d2; padding: 0 4px; background: #fff; }
.expand { width: 11px; height: 20px; }
.expand .caret { width: 8px; height: 5px; }

.grid-area {
  flex: 1;
  min-height: 0;
  display: grid;
  grid-template: minmax(0, 1fr) 10px / minmax(0, 1fr) 9px;
}
.grid-view { overflow: hidden; background: #fff; }

.sheet {
  width: calc(100% + 6px);
  table-layout: fixed;
  border-collapse: separate;
  border-spacing: 0;
}
.c-head { width: 22px; }
.c-slim { width: 9px; }
.c-text { width: 335px; }
.sheet th, .sheet td { padding: 0; white-space: nowrap; }
.sheet th {
  font-weight: normal;
  line-height: 5px;
  color: #4a4a4a;
  background: #e1e0df;
  border-right: 1px solid #bfbebd;
  border-bottom: 1px solid #bfbebd;
}
.sheet thead th { height: 14px; border-top: 1px solid #bfbebd; }
.sheet thead th:first-child { background: #f6f5f4; }
.sheet .sel { background: #3584e4; color: #fff; font-weight: bold; }
.sheet .r-first .sel { font-size: 8px; }
.sheet tbody th { position: sticky; left: 0; z-index: 1; }

.r-first > * { height: 7px; }
.r-title > * { height: 37px; }
.r-thin > * { height: 6px; }
.r-section > * { height: 20px; }
.r-text > * { height: 22px; }
.r-gap > * { height: 14px; }

/* Active cell with its fill handle */
.cursor { position: relative; border: 1px solid #3584e4; border-left: 0; border-top: 0; }
.cursor::after {
  content: "";
  position: absolute;
  right: -2px;
  bottom: -2px;
  width: 4px;
  height: 4px;
  background: #3584e4;
}
.more { width: 4px; height: 6px; }

.r-title td:nth-child(3),
.r-section td:nth-child(3) {
  background: #0f766e;
  color: #fff;
  font: bold 9px/12px Lato, sans-serif;
}
.r-section td:nth-child(3) { padding-left: 1px; }
.r-section.light td:nth-child(3) { background: #14b8a6; }
.r-title div { display: flex; justify-content: center; font-size: 12px; line-height: 18px; }

.r-text td:nth-child(3) {
  border: 1px solid #d1d5db;
  border-top: 0;
  color: #374151;
  font: 8px/9px Lato, sans-serif;
}
.tint td:nth-child(3) { background: #f0fdfa; }

u {
  text-decoration: underline wavy #d8343c 1px;
  text-underline-offset: -1px;
  text-decoration-skip-ink: none;
}

.v-scroll { background: #cfcfcf; border-top: 2px solid #777; padding: 3px 2px; }
.v-scroll .thumb { width: 5px; height: 33%; border-radius: 3px; background: #7d7f7e; }
.h-scroll { background: #cfcfcf; padding: 2px; border-right: 2px solid #777; }
.h-scroll .thumb { width: 47%; height: 6px; border-radius: 3px; background: #7d7f7e; }

/* Sheet tabs */
.sheet-tabs { display: flex; align-items: stretch; height: 16px; font-size: 8px; }
.tab-nav { display: flex; padding-left: 5px; width: 76px; }
.tab-nav button { width: 15px; }
.flip svg { transform: scaleX(-1); }
.add { width: 17px; }
.tab { padding: 0 10px 2px; border-right: 1px solid #d0cfcd; line-height: 10px; }
.tab:nth-last-child(2) { border-right-color: #9a9998; }
.tab.active {
  padding: 0 8px;
  background: #fff;
  border-right: 0;
  border-bottom: 2px solid #8d8d8d;
  font-weight: bold;
}

/* Sidebar */
.sidebar {
  position: relative;
  width: 39px;
  border-left: 1px solid #d3d1cf;
  display: flex;
  flex-direction: column;
  align-items: center;
  gap: 13px;
  padding-top: 6px;
}
.grip {
  position: absolute;
  left: -1px;
  top: 50%;
  width: 5px;
  height: 50px;
  margin-top: -25px;
  background: #999;
  display: flex;
  align-items: center;
}
.grip svg { width: 4px; height: 6px; }

/* Status bar */
.status {
  display: grid;
  grid-template-columns: 187px 166px 234px 177px 46px 30px 21px 20px minmax(0, 1fr) 96px 33px;
  height: 17px;
  border-top: 1px solid #d3d1cf;
  font-size: 8px;
}
.status > div { display: flex; align-items: center; border-right: 1px solid #e3e2e0; }
.status > div:last-child { border-right: 0; }
.s-sheet { gap: 8px; padding-left: 4px; }
.s-sheet svg { width: 15px; height: 15px; }
.s-style { padding-left: 6px; }
.status .s-lang, .status .s-sum, .status .s-pct, .status .s-mode { justify-content: center; }
.s-mode svg { width: 20px; height: 12px; }
.s-zoom { gap: 3px; justify-content: center; }
.s-zoom svg { width: 8px; height: 8px; }
.s-zoom input {
  appearance: none;
  width: 65px;
  height: 10px;
  margin: 0;
  background: linear-gradient(#999, #999) center / 100% 1px no-repeat;
}
.s-zoom input::-webkit-slider-thumb {
  appearance: none;
  width: 3px;
  height: 7px;
  border: 1px solid #555;
  background: #f6f5f4;
}
```
